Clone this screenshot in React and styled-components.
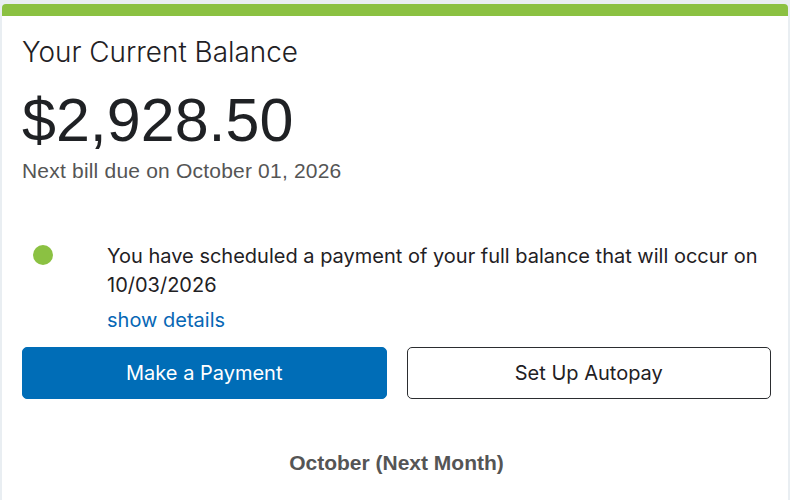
import React from "react";
import styled, { createGlobalStyle } from "styled-components";

const GlobalStyle = createGlobalStyle`
  html, body {
    margin: 0;
    padding: 0;
    background: #e9eef2;
    overflow: hidden;
  }
`;

export const Page = styled.div`
  padding: 4px 0 0 2px;
`;

export const Card = styled.div`
  width: 786px;
  background: #ffffff;
  border-top: 12px solid #8bc142;
  border-radius: 4px 4px 0 0;
  padding: 20px 17px 30px 20px;
  box-sizing: border-box;
  min-height: 496px;
`;

export const Title = styled.h2`
  font-family: Inter, "Noto Sans", sans-serif;
  font-weight: 300;
  font-size: 27.9px;
  line-height: 32px;
  color: #1f2124;
  margin: 0;
`;

export const Amount = styled.div`
  font-family: "Liberation Sans", Arial, sans-serif;
  font-size: 61px;
  line-height: 70px;
  color: #1f2124;
  margin-top: 17px;
`;

export const DueDate = styled.p`
  font-family: "Liberation Sans", Arial, sans-serif;
  font-size: 21px;
  letter-spacing: 0.2px;
  line-height: 24px;
  color: #555555;
  margin: 4px 0 0;
`;

export const Notice = styled.div`
  display: flex;
  align-items: flex-start;
  margin-top: 59px;
`;

export const Dot = styled.span`
  flex: none;
  width: 20px;
  height: 20px;
  border-radius: 50%;
  background: ${(p) => p.color};
  margin: 3px 54px 0 11px;
`;

export const NoticeBody = styled.div`
  font-family: Inter, "Noto Sans", sans-serif;
  font-size: 20px;
  line-height: 29px;
  color: #1f2124;
`;

export const Message = styled.p`
  margin: 0;
`;

export const DetailsLink = styled.a`
  display: inline-block;
  margin-top: 6px;
  color: #0767b5;
  text-decoration: none;
  cursor: pointer;
`;

export const Actions = styled.div`
  display: grid;
  grid-template-columns: 1fr 1fr;
  gap: 20px;
  margin-top: 12px;
`;

export const Button = styled.button`
  height: 52px;
  border-radius: 5px;
  font-family: Inter, "Noto Sans", sans-serif;
  font-size: 20px;
  cursor: pointer;
  border: 1px solid ${(p) => (p.primary ? "#006db7" : "#2b2d30")};
  background: ${(p) => (p.primary ? "#006db7" : "#ffffff")};
  color: ${(p) => (p.primary ? "#ffffff" : "#1f2124")};
`;

export const MonthLabel = styled.h3`
  font-family: "Liberation Sans", Arial, sans-serif;
  font-weight: 700;
  font-size: 21px;
  line-height: 24px;
  color: #555555;
  text-align: center;
  margin: 52px 0 0;
`;

const App = () => {
  return (
    <Page>
      <GlobalStyle />
      <Card>
        <Title>Your Current Balance</Title>
        <Amount>$2,928.50</Amount>
        <DueDate>Next bill due on October 01, 2026</DueDate>
        <Notice>
          <Dot color="#8bc142" />
          <NoticeBody>
            <Message>
              You have scheduled a payment of your full balance that will occur on 10/03/2026
            </Message>
            <DetailsLink>show details</DetailsLink>
          </NoticeBody>
        </Notice>
        <Actions>
          <Button primary>Make a Payment</Button>
          <Button>Set Up Autopay</Button>
        </Actions>
        <MonthLabel>October (Next Month)</MonthLabel>
      </Card>
    </Page>
  );
};

export default App;
